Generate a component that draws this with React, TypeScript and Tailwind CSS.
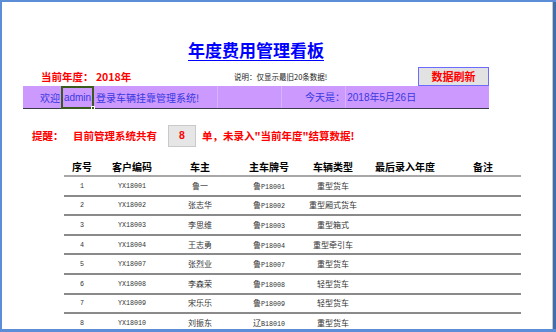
import React from "react";

type Row = {
  no: number;
  code: string;
  owner: string;
  prov: string;
  plate: string;
  kind: string;
};

const rows: Row[] = [
  { no: 1, code: "YX18001", owner: "鲁一", prov: "鲁", plate: "P18001", kind: "重型货车" },
  { no: 2, code: "YX18002", owner: "张志华", prov: "鲁", plate: "P18002", kind: "重型厢式货车" },
  { no: 3, code: "YX18003", owner: "李思维", prov: "鲁", plate: "P18003", kind: "重型箱式" },
  { no: 4, code: "YX18004", owner: "王志勇", prov: "鲁", plate: "P18004", kind: "重型牵引车" },
  { no: 5, code: "YX18007", owner: "张烈业", prov: "鲁", plate: "P18007", kind: "重型货车" },
  { no: 6, code: "YX18008", owner: "李森荣", prov: "鲁", plate: "P18008", kind: "轻型货车" },
  { no: 7, code: "YX18009", owner: "宋乐乐", prov: "鲁", plate: "P18009", kind: "轻型货车" },
  { no: 8, code: "YX18010", owner: "刘振东", prov: "辽", plate: "B18010", kind: "重型货车" },
];

// column widths (px), table starts at x=64
const cols = ["w-[36px]", "w-[64px]", "w-[72px]", "w-[66px]", "w-[62px]", "w-[82px]", "w-[74px]"];
const headers = ["序号", "客户编码", "车主", "主车牌号", "车辆类型", "最后录入年度", "备注"];

const cjk = { fontFamily: '"Noto Sans CJK SC", "Liberation Sans", sans-serif' };
const mono = "font-['Liberation_Mono',monospace] text-[6.7px]";

const App: React.FC = () => {
  return (
    <div
      className="relative w-[556px] h-[332px] overflow-hidden bg-white border-t-2 border-l-2 border-b-[3px] border-[#5b8ed6]"
      style={cjk}
    >
      <div className="flex h-full">
        <div className="flex-1 border-r border-[#c8c8c8]">
          {/* Title + info rows */}
          <div className="ml-[21px] w-[466px]">
            <div className="pt-[36px] h-[65px] text-center">
              <span className="text-[17px] leading-[20px] font-bold text-[#0000ff] underline underline-offset-[3px]">
                年度费用管理看板
              </span>
            </div>

            <div className="flex items-center h-[19px]">
              <span className="pl-[18px] w-[211px] text-[10.5px] font-bold text-[#ff0000]">
                当前年度：&nbsp;2018年
              </span>
              <span className="w-[184px] text-[7.5px] text-[#222]">说明：仅显示最旧20条数据!</span>
              <button className="w-[71px] h-[19px] bg-[#e2e2e2] border border-[#6b6bff] text-[11px] font-bold text-[#ff0000] leading-none">
                数据刷新
              </button>
            </div>

            {/* Welcome bar */}
            <div className="relative flex items-center h-[23px] bg-[#cc99ff] border-b border-[#3a3a4a] text-[10px] text-[#3a3ae0]">
              <div className="absolute left-[194px] top-0 h-full w-px bg-[#d6b4ff]" />
              <div className="absolute left-[258px] top-0 h-full w-px bg-[#d6b4ff]" />
              <div className="absolute left-[322px] top-0 h-full w-px bg-[#d6b4ff]" />
              <div className="relative flex items-center w-[282px] pl-[17px]">
                <span>欢迎</span>
                <span className="relative ml-[1px] w-[33px] h-[23px] flex items-center justify-center border-2 border-[#3b5a1e] font-['Liberation_Sans',sans-serif]">
                  admin
                  <span className="absolute -right-[3px] -bottom-[3px] w-[4px] h-[4px] bg-[#3b5a1e] border border-white" />
                </span>
                <span className="ml-[2px]">登录车辆挂靠管理系统!</span>
              </div>
              <span className="relative">
                今天是：&nbsp;<span className="font-['Liberation_Sans',sans-serif]">2018</span>年
                <span className="font-['Liberation_Sans',sans-serif]">5</span>月
                <span className="font-['Liberation_Sans',sans-serif]">26</span>日
              </span>
            </div>
          </div>

          {/* Reminder */}
          <div className="flex items-center mt-[16px] ml-[30px] h-[22px] text-[10.5px] font-bold text-[#ff0000]">
            <span className="w-[41px]">提醒：</span>
            <span>目前管理系统共有</span>
            <span className="ml-[11px] w-[28px] h-[22px] flex items-center justify-center bg-[#e6e6e6] border border-[#c9c9c9] font-['Liberation_Sans',sans-serif]">
              8
            </span>
            <span className="ml-[6px]">单，未录入"当前年度"结算数据!</span>
          </div>

          {/* Table */}
          <div className="ml-[62px] w-[457px] mt-[10px]">
            <div className="flex items-center h-[20px] border-b-2 border-[#a8a8a8] text-[10px] font-bold text-black">
              {headers.map((h, i) => (
                <div key={h} className={`${cols[i]} text-center`}>
                  {h}
                </div>
              ))}
            </div>
            {rows.map((r) => (
              <div
                key={r.no}
                className="flex items-center h-[19.6px] border-b-2 border-b-[#8a8a8a] text-[8px] text-[#333]"
              >
                <div className={`${cols[0]} text-center ${mono}`}>{r.no}</div>
                <div className={`${cols[1]} text-center ${mono}`}>{r.code}</div>
                <div className={`${cols[2]} text-center`}>{r.owner}</div>
                <div className={`${cols[3]} text-center`}>
                  {r.prov}
                  <span className={mono}>{r.plate}</span>
                </div>
                <div className={`${cols[4]} text-center`}>{r.kind}</div>
                <div className={cols[5]} />
                <div className={cols[6]} />
              </div>
            ))}
          </div>
        </div>
        <div className="w-[3px] bg-[#3d6fae]" />
      </div>
    </div>
  );
};

export default App;
